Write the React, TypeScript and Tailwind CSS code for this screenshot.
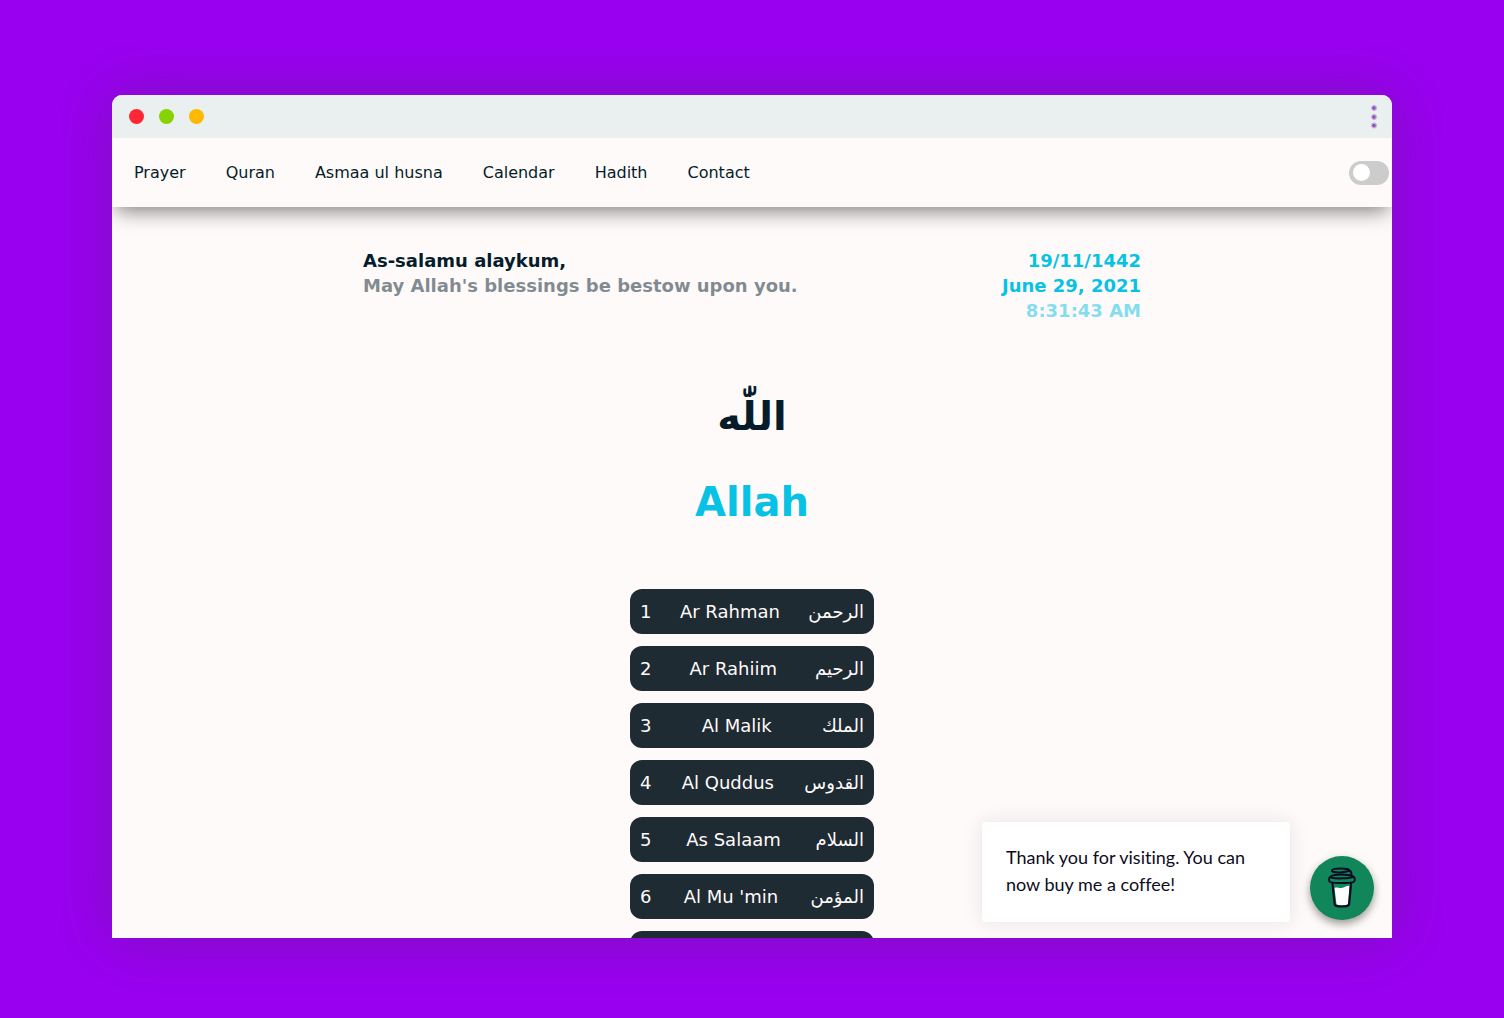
const links = ["Prayer", "Quran", "Asmaa ul husna", "Calendar", "Hadith", "Contact"];

const names = [
  { latin: "Ar Rahman", arabic: "الرحمن" },
  { latin: "Ar Rahiim", arabic: "الرحيم" },
  { latin: "Al Malik", arabic: "الملك" },
  { latin: "Al Quddus", arabic: "القدوس" },
  { latin: "As Salaam", arabic: "السلام" },
  { latin: "Al Mu 'min", arabic: "المؤمن" },
];

function TitleBar() {
  return (
    <div className="relative z-20 flex h-[43px] shrink-0 items-center justify-between bg-[#eaf0f0] pr-[14px] pl-[17px]">
      <div className="flex gap-[15px]">
        <span className="size-[15px] rounded-full bg-[#ff2735]" />
        <span className="size-[15px] rounded-full bg-[#87d300]" />
        <span className="size-[15px] rounded-full bg-[#ffb800]" />
      </div>
      <button type="button" aria-label="Window menu">
        <svg width="8" height="26" viewBox="0 0 8 26" fill="#9a45cf" stroke="#b9b4cf" strokeWidth="1.2">
          <circle cx="4" cy="4" r="2.3" />
          <circle cx="4" cy="13" r="2.3" />
          <circle cx="4" cy="21.5" r="2.3" />
        </svg>
      </button>
    </div>
  );
}

function NavBar() {
  return (
    <header className="z-10 flex h-[69px] shrink-0 items-center justify-between bg-[#fffafa] pr-[3px] pl-[22px] shadow-[0_8px_20px_-4px_rgba(0,0,0,0.5)]">
      <nav className="flex gap-10 text-base">
        {links.map((link) => (
          <a key={link} href="#" className="whitespace-nowrap">
            {link}
          </a>
        ))}
      </nav>
      <label className="flex h-6 w-10 cursor-pointer items-center rounded-full bg-[#ccc] px-1 has-checked:justify-end">
        <input type="checkbox" aria-label="Dark mode" className="sr-only" />
        <span className="size-[17px] rounded-full bg-white" />
      </label>
    </header>
  );
}

function CoffeeCup() {
  return (
    <svg width="30" height="42" viewBox="0 0 30 42" fill="none" stroke="#0d0c22" strokeLinecap="round" strokeLinejoin="round">
      <path d="M7.500 21c2.500-1.200 4 .3 7 0 3-.4 4.500-2.400 8-2.200L21 37.500c-2.500 1-9 1-11.500 0z" fill="#fff" stroke="none" />
      <path d="M5.500 17L7.600 37c.3 2 1.700 2.500 7.200 2.500s7-.5 7.300-2.500l2-20.500" strokeWidth="2.200" />
      <path d="M3.500 9.800c-2 .9-2 4.600 0 5.300 5 1.400 18 1.300 22.500 0 2.300-.8 2.400-4.500.3-5.500-3.500 2.200-17 2.100-21.500 1.200" strokeWidth="2" />
      <path d="M3.500 9.800c1.500-1.900 5.500-2.300 10.500-2.300 4 0 9 .4 12.300 2.100" strokeWidth="1.900" />
      <path d="M15.500 5.200c-4 .4-10.500.2-10.500-1.500C5 2 10 1.600 14 1.600c4.500 0 8.500.6 8 2" strokeWidth="2" />
      <path d="M15.500 5.200c3-.3 5.500-.9 7-1.700 1.600.8 2.200 2.500 1.900 5" strokeWidth="2" />
    </svg>
  );
}

function CoffeeWidget() {
  return (
    <aside className="absolute right-[18px] bottom-4 z-20 flex items-end gap-5">
      <p className="w-[308px] rounded bg-white px-6 pt-[22px] pb-6 font-[Lato,sans-serif] text-lg/[27px] text-[#0d0c22] shadow-[0_0_20px_rgba(13,12,34,0.1)] [font-variant-ligatures:none]">
        Thank you for visiting. You can now buy me a coffee!
      </p>
      <button
        type="button"
        aria-label="Buy me a coffee"
        className="mb-0.5 flex size-16 items-center justify-center rounded-full bg-[#11865b] shadow-[0_4px_8px_rgba(0,0,0,0.4)]"
      >
        <CoffeeCup />
      </button>
    </aside>
  );
}

export default function App() {
  return (
    <div className="flex h-screen flex-col bg-[#9900f0] px-28 pt-[95px] pb-20 font-['DejaVu_Sans',sans-serif] text-[#051d2b]">
      <div className="flex min-h-0 flex-1 flex-col rounded-t-[10px] shadow-[0_0_60px_rgba(60,60,60,0.3)]">
        <div className="relative flex min-h-0 flex-1 flex-col overflow-hidden rounded-t-[10px] bg-[#fffafa]">
          <TitleBar />
          <NavBar />
          <main className="flex min-h-0 flex-1 flex-col items-center overflow-hidden">
            <section className="mt-[41px] flex w-full max-w-[778px] shrink-0 justify-between text-lg/[25px] font-bold">
              <div>
                <p>As-salamu alaykum,</p>
                <p className="opacity-50">May Allah's blessings be bestow upon you.</p>
              </div>
              <div className="text-right text-[#08c2e5]">
                <p>19/11/1442</p>
                <p>June 29, 2021</p>
                <p className="opacity-50">8:31:43 AM</p>
              </div>
            </section>
            <h1 lang="ar" dir="rtl" className="mt-[70px] text-[40px]/[47px] font-bold">
              اللّٰه
            </h1>
            <h2 className="mt-[39px] text-[40px]/[47px] font-bold text-[#08c2e5]">Allah</h2>
            <ol className="mt-[63px] flex w-[244px] flex-col gap-3">
              {names.map((name, i) => (
                <li
                  key={name.latin}
                  className="flex h-[45px] items-center justify-between rounded-xl bg-[#1f2b32] px-2.5 text-lg text-[#fffafa]"
                >
                  <span>{i + 1}</span>
                  <span>{name.latin}</span>
                  <span lang="ar" dir="rtl">
                    {name.arabic}
                  </span>
                </li>
              ))}
              <li className="h-[45px] rounded-xl bg-[#1f2b32]" />
            </ol>
          </main>
          <CoffeeWidget />
        </div>
      </div>
    </div>
  );
}
